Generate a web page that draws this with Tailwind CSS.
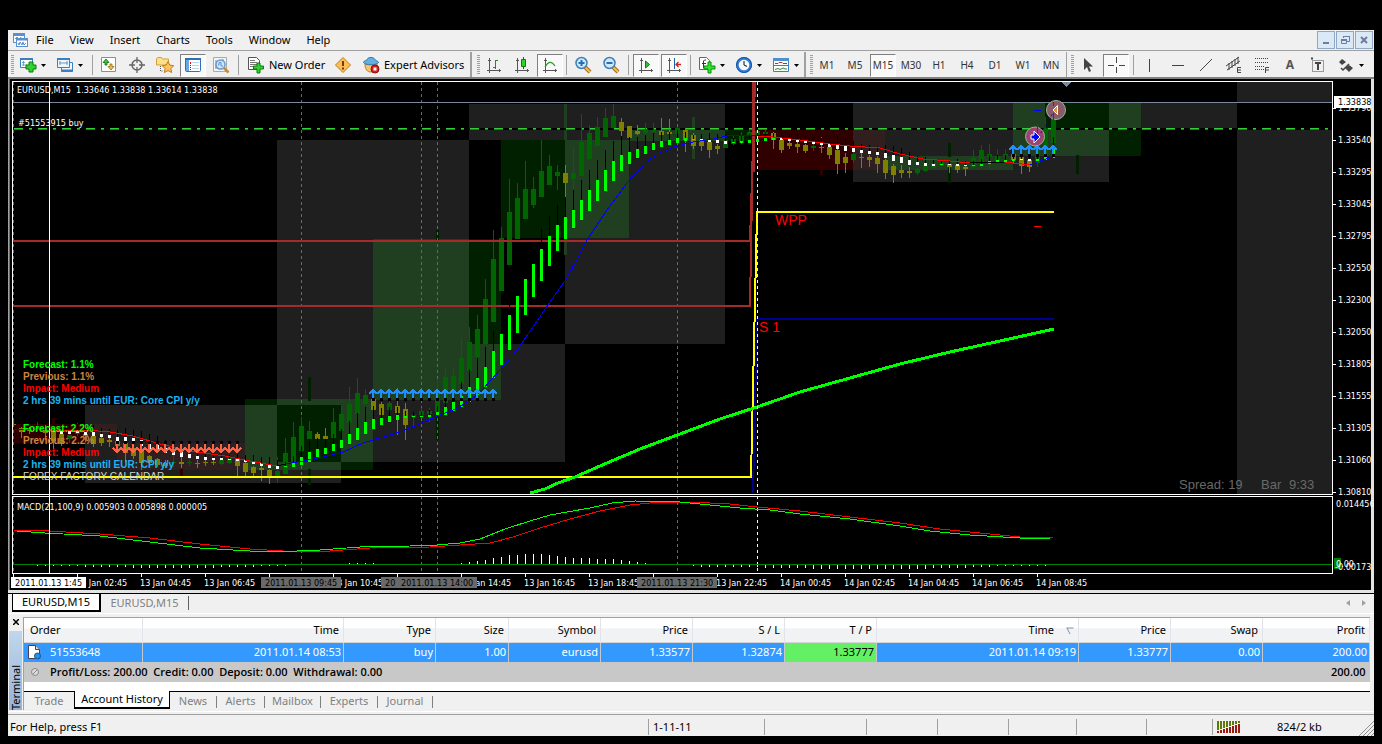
<!DOCTYPE html>
<html lang="en">
<head>
<meta charset="utf-8">
<title>EURUSD,M15</title>
<script src="https://cdn.jsdelivr.net/npm/@tailwindcss/browser@4"></script>
</head>
<body class="min-h-screen bg-black px-2 pt-[30px] pb-2 font-['Noto_Sans','DejaVu_Sans',sans-serif] text-[11px] leading-4 text-black">
<main class="bg-[#f0f0f0]">

<header class="flex h-[21px] items-center border-b border-[#a0a0a0] pl-1">
  <svg class="h-4 w-4 shrink-0" viewBox="0 0 16 16" fill="#fff" stroke="#5b8fd0"><rect x="1.500" y="1.500" width="11" height="9"/><path d="M1 3h12" stroke-width="2"/><path d="M3 7l2-2 2 3 2-3" fill="none"/><rect x="4.500" y="6.500" width="11" height="8"/><path d="M4 7.500h12" stroke-width="2"/><path d="M6 11l1 2 1-3 2 3 1-3 1 3 2-2" fill="none"/></svg>
  <nav class="flex flex-1 gap-4 pl-2">
    <button>File</button><button>View</button><button>Insert</button><button>Charts</button><button>Tools</button><button>Window</button><button>Help</button>
  </nav>
  <div class="flex gap-px pr-px">
    <button aria-label="Minimize" class="flex h-[18px] w-[18px] items-center justify-center border border-[#8fa9c4] bg-[#dbe8f6]"><svg class="h-3 w-3" viewBox="0 0 12 12"><path d="M3 9h6" stroke="#6a7f9c" stroke-width="2"/></svg></button>
    <button aria-label="Restore" class="flex h-[18px] w-[18px] items-center justify-center border border-[#8fa9c4] bg-[#dbe8f6]"><svg class="h-3 w-3" viewBox="0 0 12 12" fill="none" stroke="#6a7f9c"><path d="M4.500 4V2.500h6v5H8M4 2.500h7M2 5.500h6" /><path d="M2.500 5.500h5v4h-5zM2 6.500h6"/></svg></button>
    <button aria-label="Close" class="flex h-[18px] w-[18px] items-center justify-center border border-[#8fa9c4] bg-[#dbe8f6]"><svg class="h-3 w-3" viewBox="0 0 12 12"><path d="M3 3l6 6M9 3l-6 6" stroke="#6a7f9c" stroke-width="2"/></svg></button>
  </div>
</header>

<div class="flex h-7 items-center overflow-hidden border-b-2 border-[#808080] pt-0.5 *:shrink-0 [&_svg]:shrink-0">
  <span class="ml-[3px] mr-0.5 h-5 w-[3px] bg-[repeating-linear-gradient(#a0a0a0_0_1px,transparent_1px_2px)]"></span>
  <button aria-label="New chart" class="flex w-[37px] items-center gap-1 pl-[3px]"><svg class="h-[18px] w-[18px]" viewBox="0 0 18 18"><path d="M1.500 2.500h12v9h-12z" fill="#fff" stroke="#3c7fbf"/><path d="M1 3h13" stroke="#3c7fbf" stroke-width="2"/><path d="M4.500 5v5M3 6.500h3M3 9h5" stroke="#7aa0c8"/><path d="M10 6h4v3h3v4h-3v3h-4v-3H7V9h3z" fill="#2fd32f" stroke="#0a7d0a"/></svg><svg class="h-[3px] w-[5px]" viewBox="0 0 5 3"><path d="M0 0h5L2.500 3z"/></svg></button>
  <button aria-label="Profiles" class="flex w-[37px] items-center gap-1 pl-[3px]"><svg class="h-[18px] w-[18px]" viewBox="0 0 18 18" fill="#eef6fd" stroke="#3c7fbf"><path d="M5.500 6.500h11v9h-11z"/><path d="M5 14.500h12" stroke-width="2"/><path d="M1.500 2.500h12v9h-12z"/><path d="M1 3h13" stroke-width="2"/><path d="M4 5v4M11 5v4M3 7h9" stroke="#6f9ac6"/></svg><svg class="h-[3px] w-[5px]" viewBox="0 0 5 3"><path d="M0 0h5L2.500 3z"/></svg></button>
  <span class="mx-0.5 h-5 w-px bg-[#a0a0a0]"></span>
  <button aria-label="Market Watch" class="flex h-6 w-7 items-center justify-center"><svg class="h-[18px] w-[18px]" viewBox="0 0 18 18"><path d="M1.500 1.500h14v14h-14z" fill="#fff" stroke="#5b9bd5"/><path d="M6 3l3 3.500H7V9H5V6.500H3z" fill="#3cc83c" stroke="#0a6d0a" stroke-width=".8"/><path d="M11 14l3-3.500h-2V8h-2v2.500H8z" fill="#f5c042" stroke="#9a6a10" stroke-width=".8"/></svg></button>
  <button aria-label="Data Window" class="flex h-6 w-7 items-center justify-center"><svg class="h-[18px] w-[18px]" viewBox="0 0 18 18" fill="none" stroke="#666"><circle cx="9" cy="9" r="5" stroke-width="1.500"/><path d="M9 1v6M9 11v6M1 9h6M11 9h6" stroke-width="1.300"/></svg></button>
  <button aria-label="Navigator" class="flex h-6 w-7 items-center justify-center"><svg class="h-[18px] w-[18px]" viewBox="0 0 18 18"><path d="M.5 9V2.500l1-1h4l1 1.500h6V9z" fill="#ffe08a" stroke="#d3a03a"/><path d="M4.500 10v5h3" fill="none" stroke="#555" stroke-dasharray="1 1"/><path d="M12 5.500l1.800 3.600 3.900.6-2.800 2.800.7 4-3.600-1.900-3.600 1.900.7-4-2.800-2.800 3.900-.6z" fill="#ffc35a" stroke="#c07a1c"/></svg></button>
  <button aria-label="Terminal" aria-pressed="true" class="flex h-6 w-7 items-center justify-center"><span class="flex h-[23px] w-[26px] items-center justify-center border border-r-white border-b-white border-l-[#808080] border-t-[#808080] bg-[#f9f9f9]"><svg class="h-[18px] w-[18px]" viewBox="0 0 18 18"><rect x="1.500" y="2.500" width="15" height="13" rx="1" fill="#fff" stroke="#2f6fb5"/><path d="M1 3h16" stroke="#2f6fb5" stroke-width="2"/><path d="M2 4h3v11H2z" fill="#6ba7e0"/><path d="M6.500 6v2" stroke="red"/><path d="M6.500 9v5" stroke="#333" stroke-dasharray="1 1"/><path d="M8 6.500h7M8 9.500h7M8 12.500h7" stroke="#b9d4ef"/></svg></span></button>
  <button aria-label="Strategy Tester" class="flex h-6 w-7 items-center justify-center"><svg class="h-[18px] w-[18px]" viewBox="0 0 18 18"><path d="M1.500 1.500h13v14h-13z" fill="#f4f4f4" stroke="#aaa"/><path d="M4 4v8M11 3v4M3 12h4" stroke="#888"/><path d="M12 12l4.500 4.500" stroke="#d08a2c" stroke-width="2.500"/><circle cx="8.500" cy="8.500" r="4.500" fill="#cfe6fb" fill-opacity=".9" stroke="#6699cc" stroke-width="1.500"/><path d="M6 9h1V6.500h2V10h2" fill="none" stroke="#5b8fd0"/></svg></button>
  <span class="mx-[3px] h-5 w-px bg-[#a0a0a0]"></span>
  <button class="flex h-6 w-[87px] items-center gap-1 pl-[5px] whitespace-nowrap"><svg class="h-[18px] w-[18px]" viewBox="0 0 18 18"><path d="M1.500 1.500h8l3 3v9h-11z" fill="#fff" stroke="#555"/><path d="M3 4.500h5M3 6.500h7M3 8.500h7M3 10.500h5" stroke="#777"/><path d="M10 7h3v3h3.500v3H13v4h-3v-4H6.500v-3H10z" fill="#2fd32f" stroke="#0a7d0a"/></svg>New Order</button>
  <button aria-label="MetaEditor" class="flex h-6 w-7 items-center justify-center"><svg class="h-[18px] w-[18px]" viewBox="0 0 18 18"><path d="M9 1.500L16.500 9 9 16.500 1.500 9z" fill="#ffbe55" stroke="#c07a1c"/><path d="M9 5v5M9 11.500v2" stroke="#5a3206" stroke-width="1.800"/></svg></button>
  <button class="flex h-6 w-[110px] items-center gap-1 pl-[5px] whitespace-nowrap"><svg class="h-[18px] w-[18px]" viewBox="0 0 18 18"><path d="M3 8c0 5 2 8 6 8s6-3 6-8z" fill="#f7c46a" stroke="#b97d25"/><path d="M1.500 6.500C2 4 5 5 5 3.500 6 .8 12 .8 13 3.500c0 1.500 3 .8 3.500 3C15 9.500 3 9.500 1.500 6.500z" fill="#63aee3" stroke="#2f74ab"/><circle cx="13" cy="13" r="4" fill="#dc1f1f" stroke="#8e0c0c"/><path d="M11.500 11.500h3v3h-3z" fill="#fff"/></svg>Expert Advisors</button>
  <span class="ml-[3px] mr-[5px] h-[26px] w-0.5 bg-[#a0a0a0]"></span>
  <span class="h-5 w-[3px] bg-[repeating-linear-gradient(#a0a0a0_0_1px,transparent_1px_2px)]"></span>
  <button aria-label="Bar chart" class="flex h-6 w-7 items-center justify-center"><svg class="h-[18px] w-[18px]" viewBox="0 0 18 18" fill="none" stroke="#555"><path d="M4.500 2v15M3 4.500h3M2 14.500h14M14.500 13v3"/><path d="M10.500 4v9M10 4.500h3M8 11.500h3" stroke="#1c8c1c"/></svg></button>
  <button aria-label="Candlesticks" class="flex h-6 w-7 items-center justify-center"><svg class="h-[18px] w-[18px]" viewBox="0 0 18 18" fill="none" stroke="#555"><path d="M4.500 2v15M3 4.500h3M2 14.500h14M14.500 13v3"/><path d="M10.500 1v12" stroke="#0a6d0a"/><path d="M8.500 3.500h4v7h-4z" fill="#2fd32f" stroke="#0a7d0a"/></svg></button>
  <button aria-label="Line chart" aria-pressed="true" class="flex h-6 w-7 items-center justify-center"><span class="flex h-[23px] w-[26px] items-center justify-center border border-r-white border-b-white border-l-[#808080] border-t-[#808080] bg-[#f9f9f9]"><svg class="h-[18px] w-[18px]" viewBox="0 0 18 18" fill="none" stroke="#555"><path d="M4.500 2v15M3 4.500h3M2 14.500h14M14.500 13v3"/><path d="M4 11c3-5 6-7 10-1" stroke="#2c9c2c" stroke-width="1.300"/></svg></span></button>
  <span class="mx-0.5 h-5 w-px bg-[#a0a0a0]"></span>
  <button aria-label="Zoom in" class="flex h-6 w-7 items-center justify-center"><svg class="h-[18px] w-[18px]" viewBox="0 0 18 18"><path d="M11 11l5 5" stroke="#a86c18" stroke-width="4"/><path d="M11 11l5 5" stroke="#f3bd55" stroke-width="2"/><circle cx="7.500" cy="7" r="5.500" fill="#cde8fb" stroke="#3f7fb5" stroke-width="1.500"/><path d="M4.500 7h6M7.500 4v6" stroke="#2a6db0" stroke-width="2"/></svg></button>
  <button aria-label="Zoom out" class="flex h-6 w-7 items-center justify-center"><svg class="h-[18px] w-[18px]" viewBox="0 0 18 18"><path d="M11 11l5 5" stroke="#a86c18" stroke-width="4"/><path d="M11 11l5 5" stroke="#f3bd55" stroke-width="2"/><circle cx="7.500" cy="7" r="5.500" fill="#cde8fb" stroke="#3f7fb5" stroke-width="1.500"/><path d="M4.500 7h6" stroke="#2a6db0" stroke-width="2"/></svg></button>
  <span class="mx-[3px] h-5 w-px bg-[#a0a0a0]"></span>
  <button aria-label="Auto scroll" aria-pressed="true" class="flex h-6 w-7 items-center justify-center"><span class="flex h-[23px] w-[26px] items-center justify-center border border-r-white border-b-white border-l-[#808080] border-t-[#808080] bg-[#f9f9f9]"><svg class="h-[18px] w-[18px]" viewBox="0 0 18 18" fill="none" stroke="#555"><path d="M4.500 2v15M3 4.500h3M2 14.500h14M14.500 13v3"/><path d="M8.500 5v7l4-3.500z" fill="#2fc32f" stroke="#0a7d0a"/></svg></span></button>
  <button aria-label="Chart shift" aria-pressed="true" class="flex h-6 w-7 items-center justify-center"><span class="flex h-[23px] w-[26px] items-center justify-center border border-r-white border-b-white border-l-[#808080] border-t-[#808080] bg-[#f9f9f9]"><svg class="h-[18px] w-[18px]" viewBox="0 0 18 18" fill="none" stroke="#555"><path d="M4.500 2v15M3 4.500h3M2 14.500h14M14.500 13v3"/><path d="M9.500 2v11" stroke="#2060a0"/><path d="M11 8.500h5M13.500 6l-2.500 2.500 2.500 2.500" stroke="#c22" stroke-width="1.300"/></svg></span></button>
  <span class="mx-0.5 h-5 w-px bg-[#a0a0a0]"></span>
  <button aria-label="Indicators" class="flex w-[37px] items-center gap-1 pl-[5px]"><svg class="h-[18px] w-[18px]" viewBox="0 0 18 18"><path d="M1.500 1.500h7l3 3v9h-10z" fill="#fff" stroke="#666"/><path d="M8 4H6.500L5.500 5v7M4 7.500h4" fill="none" stroke="#333"/><path d="M10 6h3v4h4v3h-4v4h-3v-4H6v-3h4z" fill="#2fe32f" stroke="#0a8d0a"/></svg><svg class="h-[3px] w-[5px]" viewBox="0 0 5 3"><path d="M0 0h5L2.500 3z"/></svg></button>
  <button aria-label="Periodicity" class="flex w-[37px] items-center gap-1 pl-[5px]"><svg class="h-[18px] w-[18px]" viewBox="0 0 18 18"><circle cx="9" cy="9" r="8" fill="#2f7fd8"/><circle cx="9" cy="9" r="7.500" fill="none" stroke="#1a519c"/><circle cx="9" cy="9" r="5.300" fill="#f4f9ff"/><path d="M9 9V5M9 9l3 1.500" stroke="#333" stroke-width="1.200"/></svg><svg class="h-[3px] w-[5px]" viewBox="0 0 5 3"><path d="M0 0h5L2.500 3z"/></svg></button>
  <button aria-label="Templates" class="flex w-[37px] items-center gap-1 pl-[5px]"><svg class="h-[18px] w-[18px]" viewBox="0 0 18 18"><path d="M1.500 2.500h15v13h-15z" fill="#fff" stroke="#3c7fbf"/><path d="M1 3.500h16" stroke="#4e8fd0" stroke-width="3"/><path d="M2 9.500h14" stroke="#3c7fbf"/><path d="M3 7.500h3l1-1h3l1 1h4" fill="none" stroke="#a33"/><path d="M3 13.500l3-1 2 1 3-1.500 2 1h2" fill="none" stroke="#2a8c2a"/></svg><svg class="h-[3px] w-[5px]" viewBox="0 0 5 3"><path d="M0 0h5L2.500 3z"/></svg></button>
  <span class="mr-1 h-[26px] w-0.5 bg-[#a0a0a0]"></span>
  <span class="h-5 w-[3px] bg-[repeating-linear-gradient(#a0a0a0_0_1px,transparent_1px_2px)]"></span>
  <div class="flex items-center text-[10px] text-[#333]">
    <button class="h-6 w-7">M1</button><button class="h-6 w-7">M5</button>
    <button aria-pressed="true" class="flex h-6 w-7 items-center justify-center"><span class="flex h-[23px] w-[26px] items-center justify-center border border-r-white border-b-white border-l-[#808080] border-t-[#808080] bg-[#f9f9f9]">M15</span></button>
    <button class="h-6 w-7">M30</button><button class="h-6 w-7">H1</button><button class="h-6 w-7">H4</button><button class="h-6 w-7">D1</button><button class="h-6 w-7">W1</button><button class="h-6 w-7">MN</button>
  </div>
  <span class="ml-px mr-1 h-[26px] w-px bg-[#a0a0a0]"></span>
  <span class="h-5 w-[3px] bg-[repeating-linear-gradient(#a0a0a0_0_1px,transparent_1px_2px)]"></span>
  <button aria-label="Cursor" class="flex h-6 w-7 items-center justify-center"><svg class="h-[18px] w-[18px]" viewBox="0 0 18 18"><path d="M5 2v12l3-3 2 5 2-1-2-4.500h4z" fill="#444"/></svg></button>
  <button aria-label="Crosshair" aria-pressed="true" class="flex h-6 w-7 items-center justify-center"><span class="flex h-[23px] w-[26px] items-center justify-center border border-r-white border-b-white border-l-[#808080] border-t-[#808080] bg-[#f9f9f9]"><svg class="h-[18px] w-[18px]" viewBox="0 0 18 18" stroke="#444"><path d="M9.500 1v6M9.500 11v6M1 9.500h6M12 9.500h6"/></svg></span></button>
  <span class="mr-0.5 ml-[3px] h-5 w-px bg-[#a0a0a0]"></span>
  <button aria-label="Vertical line" class="flex h-6 w-7 items-center justify-center"><svg class="h-[18px] w-[18px]" viewBox="0 0 18 18"><path d="M8.500 3v13" stroke="#444"/></svg></button>
  <button aria-label="Horizontal line" class="flex h-6 w-7 items-center justify-center"><svg class="h-[18px] w-[18px]" viewBox="0 0 18 18"><path d="M3 9.500h12" stroke="#444"/></svg></button>
  <button aria-label="Trendline" class="flex h-6 w-7 items-center justify-center"><svg class="h-[18px] w-[18px]" viewBox="0 0 18 18"><path d="M3 15L15 3" stroke="#444"/></svg></button>
  <button aria-label="Equidistant channel" class="flex h-6 w-7 items-center justify-center"><svg class="h-[18px] w-[18px]" viewBox="0 0 18 18" stroke="#444" fill="none"><path d="M1 10L14 1M2 14L15 5M4 7v7M7 5v7M10 3v7M13 1v7"/><path d="M16 11.500h-3.500v5H16M12.500 14H16"/></svg></button>
  <button aria-label="Fibonacci" class="flex h-6 w-7 items-center justify-center"><svg class="h-[18px] w-[18px]" viewBox="0 0 18 18" stroke="#444" fill="none"><path d="M2 2.500h14M2 6.500h14M2 10.500h9M2 13.500h9" stroke-dasharray="1 1"/><path d="M16 11.500h-3.500V17M12.500 14H16"/></svg></button>
  <button aria-label="Text" class="flex h-6 w-7 items-center justify-center text-[12px] font-bold text-[#555]">A</button>
  <button aria-label="Text label" class="flex h-6 w-7 items-center justify-center"><svg class="h-[18px] w-[18px]" viewBox="0 0 18 18" stroke="#444" fill="none"><path d="M3.500 4.500h11v11h-11z" stroke-dasharray="1 1"/><path d="M2 2.500h2" stroke-width="2"/><path d="M6 7h6" stroke-width="2"/><path d="M9 6v8" stroke-width="2"/></svg></button>
  <button aria-label="Arrows" class="flex w-[37px] items-center gap-1 pl-[5px]"><svg class="h-[18px] w-[18px]" viewBox="0 0 18 18" fill="#444"><path d="M5 3l4 3-4 3-3-3zM12 9l4 3-4 4-4-4z"/><path d="M4 12l2 2 6-6" fill="none" stroke="#444" stroke-width="1.500"/></svg><svg class="h-[3px] w-[5px]" viewBox="0 0 5 3"><path d="M0 0h5L2.500 3z"/></svg></button>
</div>

<section aria-label="EURUSD,M15 chart">
<svg id="chart" class="block h-auto w-full bg-black font-['DejaVu_Sans_Condensed','DejaVu_Sans',sans-serif] text-[9px]" viewBox="8 79 1366 514" fill="none">
  <g shape-rendering="crispEdges">
    <g id="zones"></g>
    <g stroke="#696969" stroke-dasharray="3 3"><path d="M13.500 82V573M301.500 82V573M421.500 82V573M437.500 82V573M677.500 82V573"/></g>
    <path d="M13 102.500H1332" stroke="#778899"/>
    <path d="M13 129H1332" stroke="#000" stroke-width="2"/>
    <path d="M14 129.500H1332" stroke="#f01818" stroke-dasharray="9 6 3 6"/>
    <path d="M14 128.500H1332" stroke="#32cd32" stroke-dasharray="9 6 3 6"/>
    <g id="candles"></g>
    <g stroke-width="2">
      <path d="M13 241H750L755 82M13 306H750L754 82" stroke="#a52a2a"/>
      <path d="M753 82v90" stroke="#a52a2a" stroke-width="3"/>
      <path d="M753 493L757 319H1054" stroke="#000090"/>
      <path d="M13 477H751L757 212H1054" stroke="#ff0"/>
    </g>
    <path d="M530 493L545 489 558 483 575 477 600 466 640 449 680 434 720 419 757 407 800 392 850 378 900 364 950 352 1000 341 1054 329" stroke="#0f0" stroke-width="3"/>
    <g id="average"></g>
    <path d="M14 429H60M285 464L303 461 323 457 343 452 363 443 380 438 403 431 422 423 437 416 453 410 470 401 483 389 500 370 517 350 533 327 550 302 567 278 587 240 607 210 627 183 647 161 660 153 677 146 693 142 713 139 727 136 740 135H757M1030 165L1037 162 1046 159 1053 157" stroke="#00f"/>
    <path d="M50 430L85 430 110 432 133 436 160 444 190 451 225 456 250 461 277 466M757 136L773 137 800 140 830 144 850 146 880 148 900 154 923 159 950 161 970 163M1005 162L1030 165" stroke="red"/>
    <path d="M970 163L1005 162M277 466L285 464" stroke="#000"/>
    <g id="signals"></g>
    <path d="M757.500 82V573" stroke="#fff" stroke-dasharray="3 3"/>
    <path d="M1034 110.500h7" stroke="#00f" /><path d="M1034 226.500h7" stroke="red"/>
    <path d="M1062 82h9l-4.500 5z" fill="#778899"/>
  </g>
  <g>
    <circle cx="1035" cy="136.500" r="9.500" fill="#9d4473" stroke="#8fbc8f"/>
    <circle cx="1056" cy="110" r="9.500" fill="#8b5a66" stroke="#8fb4a4"/>
    <path d="M1034 131v4h-3v4h3v4l6-6z" fill="#00f" stroke="#fff"/>
    <path d="M1037.500 124v9M1053.500 102v4M1053.500 113v8" stroke="#006400"/>
    <path d="M1041 133L1053 113" stroke="#00f" stroke-dasharray="2 2"/>
    <path d="M1057.500 105.500v9l-4.500-4.500z" fill="#e09030" stroke="#fff"/>
  </g>
  <g shape-rendering="crispEdges">
    <path d="M13 564.500H1332" stroke="#008000"/>
    <g id="histogram"></g>
    <path d="M13 530L49 531 100 534 150 538 200 544 250 549 283 551 330 551 370 548 430 547 460 545 490 543 513 537 540 528 570 519 600 511 630 505 660 502 690 502 730 504 757 507 800 511 850 517 900 523 940 529 980 533 1020 537 1053 538" stroke="red"/>
    <path d="M17 531L45 533 100 536 150 542 200 548 250 551 297 551 320 550 360 547 410 546 437 545 460 543 480 539 505 529 530 521 550 515 590 508 612 503 635 501 680 502 700 504 740 508 770 510 800 514 850 519 900 526 930 531 970 535 1020 538 1050 539" stroke="#0f0"/>
    <path d="M12.500 81.500H1332.500V494.500H12.500zM12.500 496.500H1332.500V573.500H12.500zM49.500 82V573" stroke="#fff"/>
    <g id="ticks" stroke="#fff"></g>
    <path d="M8.500 79V593" stroke="#a0a0a0"/><path d="M9.500 79V593" stroke="#696969"/>
    <path d="M8 591.500H1374M1372.500 79V593" stroke="#e3e3e3" stroke-width="3"/>
  </g>
  <g fill="#fff">
    <text x="17" y="93" xml:space="preserve">EURUSD,M15  1.33646 1.33838 1.33614 1.33838</text>
    <text x="18" y="126">#51553915 buy</text>
    <text x="17" y="510">MACD(21,100,9) 0.005903 0.005898 0.000005</text>
  </g>
  <g id="labels" fill="#fff"></g>
  <g class="font-['Liberation_Sans',sans-serif] text-[10px] font-bold">
    <g fill="#0f0"><text x="23" y="368">Forecast: 1.1%</text><text x="23" y="432">Forecast: 2.2%</text></g>
    <g fill="#cd853f"><text x="23" y="380">Previous: 1.1%</text><text x="23" y="444">Previous: 2.2%</text></g>
    <g fill="#f00"><text x="23" y="392">Impact: Medium</text><text x="23" y="456">Impact: Medium</text></g>
    <g fill="#1eb4f0"><text x="23" y="404">2 hrs 39 mins until EUR: Core CPI y/y</text><text x="23" y="468">2 hrs 39 mins until EUR: CPI y/y</text></g>
    <text class="font-normal" x="23" y="480" fill="#d3d3d3">FOREX FACTORY CALENDAR</text>
  </g>
  <g class="font-['Liberation_Sans',sans-serif] text-[14px]">
    <g fill="#f00"><text x="775" y="225">WPP</text><text x="759" y="332">S 1</text></g>
    <g class="text-[13px]" fill="#696969"><text x="1179" y="489">Spread: 19</text><text x="1261" y="489">Bar</text><text x="1289" y="489">9:33</text></g>
  </g>
</svg>
</section>

<div class="flex h-5 items-start border-t border-black">
  <div role="tablist" aria-label="Charts" class="flex flex-1 pl-1">
    <button role="tab" aria-selected="true" class="h-[18px] w-[89px] border-r-2 border-b-2 border-l border-black bg-white">EURUSD,M15</button>
    <button role="tab" aria-selected="false" class="my-px h-4 w-[87px] text-[#808080]">EURUSD,M15</button>
    <span class="mt-0.5 h-3.5 border-l border-[#606060]"></span>
  </div>
  <button aria-label="Scroll left" class="mt-1.5 mr-3"><svg class="h-1.5 w-1" viewBox="0 0 4 6"><path d="M4 0v6L0 3z" fill="#a0a0a0"/></svg></button>
  <button aria-label="Scroll right" class="mt-1.5 mr-2"><svg class="h-1.5 w-1" viewBox="0 0 4 6"><path d="M0 0v6l4-3z" fill="#a0a0a0"/></svg></button>
</div>

<section aria-label="Terminal" class="flex border-t border-b border-white pt-[3px] pr-1 pb-px">
  <div class="flex w-[15px] flex-col items-center">
    <button aria-label="Close terminal" class="flex h-3.5 w-3.5 items-start justify-center pt-0.5"><svg class="h-1.5 w-1.5" viewBox="0 0 6 6"><path d="M0 0l6 6M6 0L0 6" stroke="#000" stroke-width="1.500"/></svg></button>
    <div class="flex w-[13px] flex-1 items-center bg-linear-to-b from-[#c0d6ee] to-[#98b4d4]"><span class="mt-auto pb-0.5 leading-[13px] [writing-mode:vertical-rl] rotate-180">Terminal</span></div>
  </div>
  <div class="min-w-0 flex-1 border-l border-t border-[#a0a0a0]">
    <table class="w-full table-fixed border-collapse text-right whitespace-nowrap">
      <colgroup><col class="w-[118px]"><col><col class="w-[92px]"><col class="w-[73px]"><col class="w-[92px]"><col class="w-[92px]"><col class="w-[92px]"><col class="w-[92px]"><col class="w-[202px]"><col class="w-[92px]"><col class="w-[92px]"><col class="w-[107px]"></colgroup>
      <thead class="bg-linear-to-b from-white from-40% to-[#f1f2f4] to-45%">
        <tr class="h-6 border-b border-[#d5d5d5] *:border-r *:border-[#e2e3ea] *:pr-1 *:font-normal">
          <th class="pl-1.5 text-left">Order</th><th>Time</th><th>Type</th><th>Size</th><th>Symbol</th><th>Price</th><th>S / L</th><th>T / P</th>
          <th>Time<svg class="ml-3 inline h-2 w-2" viewBox="0 0 8 8" fill="none" stroke="#8090a8"><path d="M.5 1h7M1 1l3 6" /></svg></th><th>Price</th><th>Swap</th><th>Profit</th>
        </tr>
      </thead>
      <tbody>
        <tr class="h-5 bg-[#3399ff] text-white *:border-r *:border-[#c8c8c8] *:py-0 *:pr-0.5">
          <td class="text-left"><span class="flex items-center gap-2 pl-0.5"><svg class="h-4 w-4" viewBox="0 0 16 16"><path d="M2.500 1.500h7l4 4v9h-11z" fill="#fff" stroke="#445"/><path d="M9.500 1.500v4h4" fill="#ddd" stroke="#445"/><circle cx="11.500" cy="12" r="3" fill="#2a8fe0" stroke="#145a96"/></svg>51553648</span></td>
          <td>2011.01.14 08:53</td><td>buy</td><td>1.00</td><td>eurusd</td><td>1.33577</td><td>1.32874</td><td class="bg-[#64f064] text-black">1.33777</td><td>2011.01.14 09:19</td><td>1.33777</td><td>0.00</td><td>200.00</td>
        </tr>
        <tr class="h-5 bg-[#c8c8c8] font-['Open_Sans','Noto_Sans',sans-serif] font-semibold">
          <td colspan="11" class="py-0 text-left"><span class="flex items-center gap-2.5 pl-1.5"><svg class="h-2.5 w-2.5" viewBox="0 0 10 10" fill="#ddd" stroke="#888"><circle cx="5" cy="5" r="3.500"/><path d="M3 7l4-4"/></svg><span class="whitespace-pre">Profit/Loss: 200.00  Credit: 0.00  Deposit: 0.00  Withdrawal: 0.00</span></span></td>
          <td class="py-0 pr-1">200.00</td>
        </tr>
      </tbody>
    </table>
    <div class="h-[9px] bg-white"></div>
    <div role="tablist" aria-label="Terminal pages" class="flex h-[19px] border-t border-black text-[#808080] [&>span]:mt-1 [&>span]:h-3 [&>span]:border-l [&>span]:border-[#808080]">
      <button role="tab" aria-selected="false" class="w-[50px]">Trade</button>
      <button role="tab" aria-selected="true" class="-mt-px h-[18px] w-24 border-r border-b-2 border-l border-black bg-white text-black">Account History</button>
      <button role="tab" aria-selected="false" class="w-[46px]">News</button><span></span>
      <button role="tab" aria-selected="false" class="w-[47px]">Alerts</button><span></span>
      <button role="tab" aria-selected="false" class="w-[55px]">Mailbox</button><span></span>
      <button role="tab" aria-selected="false" class="w-14">Experts</button><span></span>
      <button role="tab" aria-selected="false" class="w-[54px]">Journal</button><span></span>
    </div>
  </div>
</section>

<footer class="mt-0.5 flex h-[22px] border-t border-[#a0a0a0] pt-1 whitespace-nowrap *:h-4">
  <span class="min-w-0 flex-1 pl-0.5">For Help, press F1</span>
  <span class="w-[116px] border-l border-[#a0a0a0] pl-1">1-11-11</span>
  <span class="w-[102px] border-l border-[#a0a0a0]"></span><span class="w-[71px] border-l border-[#a0a0a0]"></span><span class="w-[71px] border-l border-[#a0a0a0]"></span><span class="w-[68px] border-l border-[#a0a0a0]"></span><span class="w-[70px] border-l border-[#a0a0a0]"></span><span class="w-[66px] border-l border-[#a0a0a0]"></span>
  <span class="flex w-[146px] items-center border-l border-[#a0a0a0] pl-1"><svg class="mr-9 h-3 w-6" viewBox="0 0 24 12" shape-rendering="crispEdges" fill="#5c7a08"><path d="M0 0h2v9H0zM3 0h2v8H3zM6 0h2v7H6zM9 0h2v6H9zM12 0h2v5h-2zM15 0h2v4h-2zM18 0h2v3h-2zM21 0h2v2h-2z"/><path fill="#9a1a10" d="M0 10h2v2H0zM3 9h2v3H3zM6 8h2v4H6zM9 7h2v5H9zM12 6h2v6h-2zM15 5h2v7h-2zM18 4h2v8h-2zM21 3h2v9h-2z"/></svg>824/2 kb</span>
  <svg class="w-4 self-end" viewBox="0 0 16 16" stroke="#909090"><path d="M1 16L16 1M5 16L16 5M9 16l7-7M13 16l3-3"/></svg>
</footer>
</main>

<script>
const NS = 'http://www.w3.org/2000/svg';
const layer = id => document.getElementById(id);
function el(parent, tag, attrs, text) {
  const n = document.createElementNS(NS, tag);
  for (const a in attrs) n.setAttribute(a, attrs[a]);
  if (text) n.textContent = text;
  parent.appendChild(n);
}
const box = (g, x1, y1, x2, y2, fill) => el(g, 'rect', {x: x1, y: y1, width: x2 - x1, height: y2 - y1, fill});

// Session zones: left, top, right, bottom, colour
const N = '#1f1f1f', D = '#002000', G = '#203e20', M = '#300000', R = '#301f1f', K = '#000';
[[277,140,469,462,N],[85,405,277,483,N],[277,462,341,483,N],[245,399,277,405,D],[245,405,277,470,G],[277,399,373,462,G],[277,405,341,462,D],
 [277,462,341,470,G],[341,462,373,470,D],[373,239,469,400,G],[469,344,565,462,N],[469,239,501,344,D],[469,344,501,400,G],
 [469,104,725,140,N],[565,140,725,344,N],[501,140,565,238,D],[565,140,629,238,G],[629,130,725,141,G],[725,130,757,141,D],
 [853,103,1109,182,N],[1109,103,1237,130,N],[1237,82,1332,103,N],[1237,130,1332,494,N],[1013,103,1045,130,G],[1045,103,1109,130,D],[1109,103,1141,130,G],
 [1013,130,1109,156,G],[1109,130,1141,156,D],[885,156,1013,170,G],[757,130,885,170,M],[853,130,885,170,R],
 [13,424,85,443,M],[85,424,117,443,R],[117,443,245,470,R],
 [308,377,311,401,D],[308,469,311,485,D],[436,230,439,240,D],[436,415,439,440,D],[564,104,567,140,G],[564,238,567,255,G],
 [692,117,695,159,G],[948,143,951,157,D],[948,166,951,183,D],[1076,155,1079,174,D],[180,469,183,478,M],[52,418,55,424,M],[820,170,823,175,M]
].forEach(z => box(layer('zones'), ...z));

// Candles, one every 8px: colour, wick top, body top, body bottom, wick bottom
const candles = `o421,424,425,427 o427,428,432,438 o427,430,431,434 g422,428,430,431 o425,430,433,440 o428,430,441,449 o430,434,444,446 g432,435,439,443 g423,430,434,436 o432,434,436,442
o434,436,444,447 o436,438,443,446 o438,440,442,447 o440,441,446,447 o443,443,453,462 o446,448,456,459 o449,451,463,470 o455,456,463,466 o458,459,465,467 o460,463,466,468
g455,462,463,467 o457,462,464,468 g457,462,463,466 o460,463,464,468 o459,462,463,466 o460,462,463,465 g457,460,464,465 g455,457,463,464 o458,459,466,478 o462,463,472,477
o466,467,473,477 o466,468,470,481 o469,470,477,484 g457,471,476,483 g438,453,474,474 g422,437,463,463 g417,426,451,451 g421,431,439,439 o432,434,439,441 o428,436,439,440
g408,422,438,438 g406,414,431,431 g387,404,423,423 g378,393,414,414 g389,395,404,404 o399,399,410,410 o402,404,415,420 g386,403,410,410 o388,406,413,435 o403,409,425,440
g412,415,417,426 g408,411,415,416 g408,411,414,422 g380,392,412,412 g368,377,403,403 g367,376,391,391 g338,358,384,384 g327,342,371,371 g315,329,357,357 g279,299,344,344
g230,259,322,322 g227,238,291,291 g179,212,265,265 g183,198,239,239 g161,189,219,219 g177,189,205,208 g140,171,197,197 g155,166,185,185 g165,172,176,190 o165,173,183,200
g147,173,179,192 g114,142,176,176 g125,133,159,159 g117,127,146,146 g108,118,137,137 g104,116,128,128 o118,122,131,140 o126,126,138,138 o125,131,134,135 g123,129,133,135
g123,130,132,133 o118,131,135,136 o119,132,134,136 g127,128,134,136 o128,130,140,152 o133,135,146,149 o138,140,146,151 o140,142,150,158 o144,146,149,154 g139,140,148,148
g135,139,144,145 g132,136,143,144 g130,132,135,142 g130,131,135,140 g130,132,134,138 o132,133,140,149 o138,140,150,153 o141,143,146,149 o142,144,147,153 o144,145,151,153
g144,146,148,151 o137,147,148,153 o146,147,155,159 o148,150,164,174 o153,157,163,173 g152,154,160,163 o153,157,158,168 o155,157,160,167 o156,158,164,173 o159,160,173,179
o164,166,175,183 o165,170,173,178 o167,171,173,178 g168,169,173,175 g165,166,171,172 g162,163,168,169 g161,162,165,166 o163,164,167,173 o164,165,170,173 o166,167,169,176
g150,158,167,168 g145,150,163,168 g144,154,157,169 g149,156,162,163 g149,154,156,162 o152,154,160,163 o155,157,166,174 o158,160,167,172 g124,148,163,167 g117,128,156,158 g102,115,143,143`;
candles.split(/\s+/).forEach((c, i) => {
  const x = 13 + 8 * i, fill = c[0] === 'o' ? '#808000' : '#006400', [wt, bt, bb, wb] = c.slice(1).split(',').map(Number);
  box(layer('candles'), x, wt, x + 1, Math.max(wb, wt), fill);
  box(layer('candles'), i ? x - 2 : x, bt, x + 3, bb, fill);
});

// Smoothed average bars from the sixth candle on: top-bottom, "w" marks a falling bar
const average = `w429-432 w430-434 w431-434 w430-433 w432-435 w432-436 w434-437 w435-438 w437-441 w437-443 w438-443 w440-446 w443-449 w445-451 w448-453 w450-455 w452-457 w454-458 w456-459 w457-460
w458-460 w458-460 w459-460 w459-461 w460-462 w461-464 w463-466 w464-468 w466-469 466-467 463-467 457-465 452-462 449-457 448-454 444-451 440-448 434-444 428-440 422-434 419-429 418-425 416-422 415-420 416-418 416-417 416-417 415-417
412-415 407-415 402-411 396-407 387-402 378-395 367-387 351-378 334-365 315-350 296-333 279-315 264-297 249-281 236-266 225-251 217-239 210-228 200-220 190-211 180-201 170-191 161-181 155-171 152-164 149-158 146-154 143-150 141-147 140-145 138-143 138-141 139-140
w139-141 w139-142 w140-143 w141-144 142-143 141-143 140-143 139-142 138-141 138-140 w138-140 w139-141 w139-142 w141-143 w142-144 w143-145 w144-147 w144-149 w146-151 w148-152 w150-153 w151-154 w152-155 w153-158 w155-161 w157-163 w160-165 w162-165 w163-166 w164-166
164-165 w164-165 w164-166 w165-166 165-166 164-166 161-164 160-162 160-162 159-161 w159-160 w159-161 159-161 155-160 149-158`;
average.split(/\s+/).forEach((c, i) => {
  const x = 53 + 8 * i, [t, b] = c.replace('w', '').split('-').map(Number);
  box(layer('average'), x, t - Math.min(20, b - t + 3), x + 1, t, K);
  box(layer('average'), x - 1, t, x + 2, b, c[0] === 'w' ? '#fff' : '#0f0');
});

// Signal arrows
function arrow(x, y, dir, stroke) {
  const g = layer('signals');
  box(g, x - 1, dir > 0 ? y - 3 : y + 9, x + 2, dir > 0 ? y : y + 12, K);
  el(g, 'path', {d: dir > 0 ? `M${x} ${y}v9M${x - 4} ${y + 4}l4 4 4-4` : `M${x} ${y + 9}v-9M${x - 4} ${y + 5}l4-4 4 4`, stroke, 'stroke-width': 2});
}
for (let x = 117; x <= 237; x += 8) arrow(x, 444, 1, '#ff6347');
for (let x = 373; x <= 493; x += 8) arrow(x, 389, -1, '#1e90ff');
for (let x = 1013; x <= 1053; x += 8) arrow(x, 145, -1, '#1e90ff');

// MACD histogram
const up = [1,2,3,4,6,7,9,9,10,10,10,9,8,7,6,6,6,5,5,5,4,3,2,1];
up.forEach((h, i) => box(layer('histogram'), 461 + 8 * i, 564 - h, 462 + 8 * i, 564, '#fff'));
for (let x = 349; x <= 373; x += 8) box(layer('histogram'), x, 563, x + 1, 564, '#fff');
for (let x = 37; x <= 285; x += 8) box(layer('histogram'), x, 565, x + 1, 565 + (x < 80 || x > 260 ? 1 : x < 130 || x > 220 ? 2 : 3), '#fff');
for (let x = 693; x <= 1045; x += 8) box(layer('histogram'), x, 565, x + 1, 565 + (x < 700 || x > 990 ? 1 : x < 760 || x > 965 ? 2 : x < 810 || x > 930 ? 3 : 4), '#fff');

// Axes
const L = layer('labels'), T = layer('ticks');
['1.33790','1.33540','1.33295','1.33045','1.32795','1.32550','1.32300','1.32050','1.31805','1.31555','1.31305','1.31060','1.30810'].forEach((p, i) => {
  el(L, 'text', {x: 1338, y: 111 + 32 * i}, p);
  el(T, 'path', {d: `M1333 ${108.5 + 32 * i}h3`});
});
box(L, 1334, 96, 1371, 108, '#fff');
el(L, 'text', {x: 1338, y: 105, fill: '#000'}, '1.33838');
el(L, 'text', {x: 1336, y: 507}, '0.014456');
box(L, 1334, 558, 1341, 569, '#008000');
el(L, 'text', {x: 1336, y: 567}, '0.00');
el(L, 'text', {x: 1335, y: 570}, '-0.00173');
[[76,'13 Jan 02:45'],[140,'13 Jan 04:45'],[204,'13 Jan 06:45'],[332,'13 Jan 10:45'],[460,'13 Jan 14:45'],[524,'13 Jan 16:45'],[588,'13 Jan 18:45'],
 [716,'13 Jan 22:45'],[780,'14 Jan 00:45'],[844,'14 Jan 02:45'],[908,'14 Jan 04:45'],[972,'14 Jan 06:45'],[1036,'14 Jan 08:45']].forEach(([x, t]) => el(L, 'text', {x, y: 586}, t));
for (let x = 13; x < 1050; x += 64) el(T, 'path', {d: `M${x + .5} 574v3`});
[[11,86,'2011.01.13 1:45','#fff'],[261,341,'2011.01.13 09:45','#696969'],[381,397,'20','#696969'],[397,477,'2011.01.13 14:00','#696969'],[637,717,'2011.01.13 21:30','#696969']].forEach(([a, b, t, f]) => {
  box(L, a, 577, b, 588, f);
  el(L, 'text', {x: a + 4, y: 586, fill: '#000'}, t);
});
</script>
</body>
</html>
